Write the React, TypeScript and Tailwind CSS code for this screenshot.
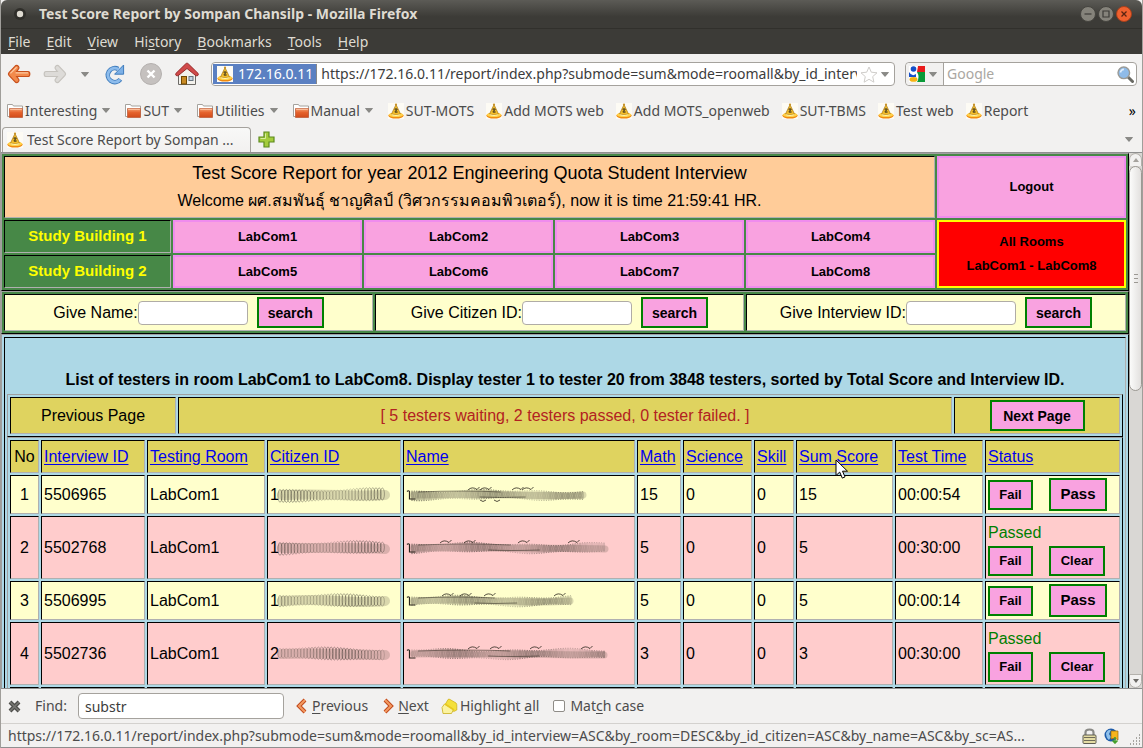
import { FC, ReactNode } from "react";

const cellBorder = "border border-t-black border-l-black border-b-[#b0b0b0] border-r-[#b0b0b0]";
const tableBorder = "border border-t-[#a0a0a0] border-l-[#a0a0a0] border-b-black border-r-black";

const menus = [
	["", "F", "ile"],
	["", "E", "dit"],
	["", "V", "iew"],
	["Hi", "s", "tory"],
	["", "B", "ookmarks"],
	["", "T", "ools"],
	["", "H", "elp"]
];

const folders = ["Interesting", "SUT", "Utilities", "Manual"];
const bookmarks = ["SUT-MOTS", "Add MOTS web", "Add MOTS_openweb", "SUT-TBMS", "Test web", "Report"];

const headings = ["Interview ID", "Testing Room", "Citizen ID", "Name", "Math", "Science", "Skill", "Sum Score", "Test Time", "Status"];

const testers = [
	{ no: 1, id: "5506965", first: "1", nameWidth: 184, math: 15, sum: 15, time: "00:00:54", passed: false, marks: [62, 74, 106, 116] },
	{ no: 2, id: "5502768", first: "1", nameWidth: 206, math: 5, sum: 5, time: "00:30:00", passed: true, marks: [34, 58, 112, 162] },
	{ no: 3, id: "5506995", first: "1", nameWidth: 171, math: 5, sum: 5, time: "00:00:14", passed: false, marks: [36, 54, 78, 148] },
	{ no: 4, id: "5502736", first: "2", nameWidth: 205, math: 3, sum: 3, time: "00:30:00", passed: true, marks: [62, 84, 124, 175] }
];

const Caret: FC = () => (
	<svg width="8" height="5" viewBox="0 0 8 5" className="shrink-0">
		<path d="M0.5 0.5h7L4 4.5z" fill="#8a8a86" stroke="#6a6a67" strokeWidth="0.6" />
	</svg>
);

const Bell: FC = () => (
	<svg width="16" height="16" viewBox="0 0 16 16" className="shrink-0">
		<rect width="16" height="16" fill="#fdfbf4" />
		<ellipse cx="8" cy="12.6" rx="7.6" ry="3" fill="#f08a10" />
		<ellipse cx="8" cy="11.8" rx="7.2" ry="2.3" fill="#ffd24a" />
		<path d="M8 1.6 3.6 10.8Q8 13.6 12.4 10.8z" fill="#f3bd2c" stroke="#a8781a" strokeWidth="0.7" />
		<circle cx="8" cy="1.6" r="1.1" fill="#c9942c" />
		<path d="M6.4 6.2h3L6.8 9h3M8 5v5" fill="none" stroke="#5a4a1e" strokeWidth="1" />
		<path d="M4.2 11.8q3.8 1.6 7.6 0" fill="none" stroke="#fff3b0" strokeWidth="1" />
	</svg>
);

const Folder: FC = () => (
	<svg width="16" height="16" viewBox="0 0 16 16" className="shrink-0">
		<defs>
			<linearGradient id="folder" x2="0" y2="1">
				<stop offset="0" stopColor="#f6a070" />
				<stop offset="0.45" stopColor="#e5622c" />
				<stop offset="1" stopColor="#d14a1a" />
			</linearGradient>
		</defs>
		<path d="M0.5 13.5V1.5h5l1 1.5h9v10.5z" fill="#fff" stroke="#a5a29d" />
		<path d="M2.5 5.5h13v9h-13z" fill="url(#folder)" stroke="#c0603c" strokeWidth="0.8" />
		<path d="M3.2 6.3h11.6" stroke="#fbc7a8" />
	</svg>
);

const ArrowIcon: FC<{ forward?: boolean }> = ({ forward }) => (
	<svg width="24" height="20" viewBox="0 0 24 20">
		<path
			d={
				forward
					? "M12.5 2.4q2-2 3.6 0L22 8.6q1.2 1.4 0 2.8l-5.9 6.2q-1.6 2-3.6 0-1.2-1.6.4-3.2l1.4-1.9H3q-1.8 0-1.8-2.5T3 7.500h11.3l-1.4-1.900q-1.6-1.6-.4-3.2z"
					: "M11.5 2.4q-2-2-3.6 0L2 8.6q-1.2 1.4 0 2.8l5.9 6.2q1.6 2 3.6 0 1.2-1.6-.4-3.2L9.7 12.500H21q1.8 0 1.8-2.500T21 7.500H9.7l1.4-1.900q1.6-1.6.4-3.2z"
			}
			fill={forward ? "#dddbd8" : "#f28a4c"}
			stroke={forward ? "#c6c3be" : "#c8501c"}
			strokeWidth="1.2"
		/>
		{!forward && <path d="M3.4 9.4 9.6 3.2M8.6 8.8H21" fill="none" stroke="#fcc79e" strokeWidth="1.3" />}
	</svg>
);

const ReloadIcon: FC = () => (
	<svg width="21" height="21" viewBox="0 0 21 21">
		<path d="M16.4 15.4A7 7 0 1 1 14.2 5" fill="none" stroke="#3f7cbc" strokeWidth="4.6" />
		<path d="M19.6 1v9.2h-9z" fill="#7db0e6" stroke="#3f7cbc" strokeWidth="1" />
		<path d="M16 15.8A7 7 0 1 1 15 5.4" fill="none" stroke="#8dbcec" strokeWidth="2.8" />
	</svg>
);

const StopIcon: FC = () => (
	<svg width="22" height="22" viewBox="0 0 22 22">
		<circle cx="11" cy="11" r="10.5" fill="#c5c1bf" stroke="#b4b0ae" />
		<path d="m7.5 7.5 7 7m0-7-7 7" stroke="#fff" strokeWidth="2.4" />
	</svg>
);

const HomeIcon: FC = () => (
	<svg width="24" height="24" viewBox="0 0 24 24">
		<path d="M3.5 12 12 5l8.5 7v10.500h-17z" fill="#f3f1ec" stroke="#6c6a66" />
		<path
			d="M12 1.200q.8 0 1.500.8l9.700 9.500q.4 1.400-.4 2-1 .8-2.400-.2L12 6.500l-8.400 6.800q-1.400 1-2.400.2-.8-.6-.4-2L10.500 2q.7-.8 1.500-.8z"
			fill="#d04a4a"
			stroke="#8f2020"
			strokeWidth="0.9"
		/>
		<rect x="6.5" y="14.500" width="5" height="7.500" fill="#c88a24" stroke="#704800" />
		<rect x="14" y="14.500" width="4" height="4" fill="#c4d4e2" stroke="#66737e" />
	</svg>
);

const GoogleIcon: FC = () => (
	<svg width="16" height="16" viewBox="0 0 16 16" className="shrink-0">
		<rect width="16" height="16" fill="#fff" />
		<path d="M9 0h7v6H8z" fill="#ea1c1c" />
		<path d="M8 6h8v10H8q3-5 0-10z" fill="#0a9a38" />
		<path d="M0 6q3 5 7 2v3H0z" fill="#1650c8" />
		<circle cx="4.5" cy="3" r="2.800" fill="#1650c8" />
		<ellipse cx="4.5" cy="13.4" rx="4" ry="2.400" fill="#f5b414" />
	</svg>
);

const SearchIcon: FC = () => (
	<svg width="17" height="17" viewBox="0 0 17 17" className="shrink-0">
		<path d="m10.5 10.5 5 5" stroke="#6a6a64" strokeWidth="3" strokeLinecap="round" />
		<circle cx="6.8" cy="6.8" r="5.8" fill="#8fbbe8" stroke="#9a9a96" strokeWidth="1.4" />
		<path d="M3.6 6.6a3.3 3.3 0 0 1 3.3-3.3" fill="none" stroke="#e2effc" strokeWidth="1.7" />
	</svg>
);

// scrubbed-out personal data
const Scribble: FC<{ width: number; marks?: number[]; shift: number }> = ({ width, marks, shift }) => {
	const named = Boolean(marks);
	const step = named ? 2.4 : 3.2;
	const loops = Array.from({ length: Math.floor((width - 10) / step) }, (_, i) => i);

	return (
		<svg width={width} height="22" viewBox={`0 0 ${width} 22`} className="shrink-0">
			<path
				d={`M8 11Q${width * 0.3} ${9 + (shift % 3)} ${width * 0.55} 11T${width - 7} ${12 - (shift % 2)}`}
				fill="none"
				stroke="#554f42"
				strokeOpacity="0.22"
				strokeWidth={named ? 7 : 10}
				strokeLinecap="round"
			/>
			{loops.map((i) => (
				<ellipse
					key={i}
					cx={6 + i * step}
					cy={11 + Math.sin(i / 9 + shift)}
					rx={named ? 0.7 : 2}
					ry={(named ? 4.4 : 5.6) + Math.sin(i / 4 + shift) * 0.9}
					fill="none"
					stroke="#2e2a24"
					strokeOpacity={0.34 + Math.sin(i / 5 + shift) * 0.14}
					strokeWidth="0.8"
				/>
			))}
			{named && <path d="M1 7.5q1.5-1.5 2.500 0v7.500h6" fill="none" stroke="#2a251c" strokeWidth="1.2" />}
			{named && (
				<path
					d={`M12 8q${width / 4}-2 ${width * 0.45} 0M${width * 0.4} 13q20 1 ${width * 0.25} 0`}
					fill="none"
					stroke="#2a251c"
					strokeOpacity="0.5"
				/>
			)}
			{marks?.map((x) => (
				<path key={x} d={`M${x} 6q4-4 9-.5l2.500-2.500`} fill="none" stroke="#2a251c" strokeOpacity="0.8" />
			))}
			{marks && shift === 1 && <path d={`M${marks[1]} 16q3 3 6 0M${marks[1] + 14} 16q3 3 6 0`} fill="none" stroke="#2a251c" strokeOpacity="0.8" />}
		</svg>
	);
};

const ActionButton: FC<{ children: ReactNode; className: string }> = ({ children, className }) => (
	<button className={`border-2 border-[#008000] bg-[#f9a2e0] font-bold text-black ${className}`}>{children}</button>
);

const RoomCell: FC<{ name: string }> = ({ name }) => (
	<td className="p-0">
		<button className="block h-[33px] w-full border-2 border-[#f08cee] bg-[#f9a2e0] text-[13px] font-bold">{name}</button>
	</td>
);

const SearchCell: FC<{ label: string; name: string }> = ({ label, name }) => (
	<td className={`bg-[#ffffcc] p-[2px] ${cellBorder}`}>
		<form className="flex items-center justify-center" onSubmit={(e) => e.preventDefault()}>
			<label htmlFor={name}>{label}</label>
			<input id={name} className="mr-[9px] h-6 w-[110px] rounded border border-[#b0aca6] bg-white px-1" />
			<ActionButton className="h-[31px] w-[67px] text-sm">search</ActionButton>
		</form>
	</td>
);

const BrowserHeader: FC = () => (
	<header className="shrink-0 border-b border-[#8f8f8f] bg-[#f2f1f0] text-sm text-[#4c4c4c]">
		<div className="flex h-[29px] items-center gap-3 rounded-t-md border-b border-[#31302c] bg-linear-to-b from-[#5c5b56] to-[#3c3b37] to-60% pr-[10px] pl-3">
			<svg width="14" height="14" viewBox="0 0 14 14">
				<circle cx="7" cy="7" r="6" fill="#2f2e2a" />
				<circle cx="7" cy="7" r="3.2" fill="#dfdbd2" />
			</svg>
			<p className="flex-1 text-sm font-bold text-[#dfdbd2]">Test Score Report by Sompan Chansilp - Mozilla Firefox</p>
			<div className="flex gap-[2px]">
				<button aria-label="Minimize">
					<svg width="16" height="16" viewBox="0 0 16 16">
						<circle cx="8" cy="8" r="7.5" fill="#85837b" stroke="#45443f" />
						<path d="M4.5 8h7" stroke="#3c3b37" strokeWidth="1.2" />
					</svg>
				</button>
				<button aria-label="Maximize">
					<svg width="16" height="16" viewBox="0 0 16 16">
						<circle cx="8" cy="8" r="7.5" fill="#85837b" stroke="#45443f" />
						<path d="M5 5h6v6H5z" fill="none" stroke="#3c3b37" strokeWidth="1.2" />
					</svg>
				</button>
				<button aria-label="Close">
					<svg width="16" height="16" viewBox="0 0 16 16">
						<circle cx="8" cy="8" r="7.5" fill="#f0612f" stroke="#a8401c" />
						<path d="m5.5 5.5 5 5m0-5-5 5" stroke="#5a2412" strokeWidth="1.3" />
					</svg>
				</button>
			</div>
		</div>
		<nav className="flex h-[25px] items-center gap-4 bg-[#3c3b37] px-[7px] text-[#dfdbd2]">
			{menus.map(([before, key, after]) => (
				<button key={after}>
					{before}
					<span className="underline underline-offset-2">{key}</span>
					{after}
				</button>
			))}
		</nav>
		<div className="flex h-10 items-center pr-[5px] pl-[6px]">
			<button aria-label="Back">
				<ArrowIcon />
			</button>
			<button aria-label="Forward" className="ml-3">
				<ArrowIcon forward />
			</button>
			<button aria-label="History" className="ml-[14px]">
				<Caret />
			</button>
			<button aria-label="Reload" className="ml-[15px]">
				<ReloadIcon />
			</button>
			<button aria-label="Stop" className="ml-[15px]">
				<StopIcon />
			</button>
			<button aria-label="Home" className="ml-[13px]">
				<HomeIcon />
			</button>
			<div className="ml-3 flex h-6 min-w-0 flex-1 items-center rounded border border-[#a5a29d] bg-white pr-[5px] pl-px">
				<span className="flex h-5 items-center gap-[5px] border-r border-[#888] bg-[#5b80c2] pr-[3px] pl-1 text-white">
					<Bell />
					172.16.0.11
				</span>
				<input
					aria-label="Address"
					className="ml-1 min-w-0 flex-1 text-[#3c3c3c]"
					defaultValue="https://172.16.0.11/report/index.php?submode=sum&mode=roomall&by_id_interview=ASC"
				/>
				<svg width="18" height="17" viewBox="0 0 18 17" className="mx-[3px] shrink-0">
					<path d="m9 1 2.3 5.2 5.7.6-4.3 3.8 1.2 5.600L9 13.3l-4.900 2.900 1.2-5.600L1 6.800l5.700-.6z" fill="#fff" stroke="#cfcdca" />
				</svg>
				<Caret />
			</div>
			<div className="ml-[10px] flex h-6 w-[232px] items-center rounded border border-[#a5a29d] bg-white pr-[2px]">
				<span className="flex h-full items-center gap-1 rounded-l border-r border-[#a5a29d] bg-[#f2f1f0] pr-[6px] pl-[3px]">
					<GoogleIcon />
					<Caret />
				</span>
				<input aria-label="Search" placeholder="Google" className="ml-[3px] min-w-0 flex-1 placeholder:text-[#aaa7a2]" />
				<SearchIcon />
			</div>
		</div>
		<div className="flex h-[33px] items-center gap-[15px] px-[6px]">
			{folders.map((name) => (
				<button key={name} className="flex items-center gap-[2px] whitespace-nowrap">
					<Folder />
					{name}
					<span className="ml-[3px]">
						<Caret />
					</span>
				</button>
			))}
			<div className="flex flex-1 items-center gap-3">
				{bookmarks.map((name) => (
					<a key={name} href="#" className="flex items-center gap-[2px] whitespace-nowrap">
						<Bell />
						{name}
					</a>
				))}
			</div>
			<button aria-label="More bookmarks" className="text-black">
				»
			</button>
		</div>
		<div className="flex h-[25px] items-center pr-[9px] pl-px">
			<div className="flex h-[25px] w-[249px] items-center gap-1 rounded-t border border-b-0 border-[#a5a29d] bg-linear-to-b from-[#f8f8f7] to-[#f2f1f0] pl-1">
				<Bell />
				<span className="truncate">Test Score Report by Sompan ...</span>
			</div>
			<button aria-label="New tab" className="ml-[7px]">
				<svg width="17" height="17" viewBox="0 0 17 17">
					<path d="M6 1h5v5h5v5h-5v5H6v-5H1V6h5z" fill="#a4cc3c" stroke="#5c8a1c" strokeWidth="1.2" />
					<path d="M7.5 2.5v5h-5" fill="none" stroke="#d8eca0" />
				</svg>
			</button>
			<span className="flex-1" />
			<Caret />
		</div>
	</header>
);

const ScoreTable: FC = () => (
	<table className={`w-full table-fixed border-separate border-spacing-[2px] text-left ${tableBorder}`}>
		<colgroup>
			<col className="w-[29px]" />
			<col className="w-[104px]" />
			<col className="w-[118px]" />
			<col className="w-[134px]" />
			<col />
			<col className="w-[44px]" />
			<col className="w-[69px]" />
			<col className="w-[40px]" />
			<col className="w-[97px]" />
			<col className="w-[88px]" />
			<col className="w-[135px]" />
		</colgroup>
		<thead>
			<tr className="h-[33px] bg-[#dfd35f]">
				<th className={`text-center font-normal ${cellBorder}`}>No</th>
				{headings.map((heading) => (
					<th key={heading} className={`relative px-[2px] font-normal whitespace-nowrap ${cellBorder}`}>
						<a href="#" className="text-[#0000ee] underline underline-offset-2">
							{heading}
						</a>
						{heading === "Sum Score" && (
							<svg width="14" height="21" viewBox="0 0 14 21" className="absolute top-[18px] left-[38px] z-10">
								<path d="M1 1v15.5l3.700-3.400 2.600 6 2.700-1.200-2.500-5.700h5z" fill="#fff" stroke="#000" />
							</svg>
						)}
					</th>
				))}
			</tr>
		</thead>
		<tbody>
			{testers.map((tester) => (
				<tr key={tester.no} className={tester.passed ? "h-[63px] bg-[#ffcccc]" : "h-[39px] bg-[#ffffcc]"}>
					<td className={`text-center ${cellBorder}`}>{tester.no}</td>
					<td className={`px-[2px] ${cellBorder}`}>{tester.id}</td>
					<td className={`px-[2px] ${cellBorder}`}>LabCom1</td>
					<td className={`px-[2px] ${cellBorder}`}>
						<div className="flex items-center">
							<span className="w-1">{tester.first}</span>
							<Scribble width={118} shift={tester.no} />
						</div>
					</td>
					<td className={`px-[2px] ${cellBorder}`}>
						<Scribble width={tester.nameWidth} marks={tester.marks} shift={tester.no} />
					</td>
					<td className={`px-[2px] ${cellBorder}`}>{tester.math}</td>
					<td className={`px-[2px] ${cellBorder}`}>0</td>
					<td className={`px-[2px] ${cellBorder}`}>0</td>
					<td className={`px-[2px] ${cellBorder}`}>{tester.sum}</td>
					<td className={`px-[2px] ${cellBorder}`}>{tester.time}</td>
					<td className={`p-[2px] ${cellBorder}`}>
						{tester.passed && <p className="h-[27px] leading-[27px] text-[#008000]">Passed</p>}
						<div className="flex items-center gap-4">
							<ActionButton className="h-[30px] w-[45px] text-[13px]">Fail</ActionButton>
							{tester.passed ? (
								<ActionButton className="h-[30px] w-[56px] text-[13px]">Clear</ActionButton>
							) : (
								<ActionButton className="h-[33px] w-[58px] text-[15px]">Pass</ActionButton>
							)}
						</div>
					</td>
				</tr>
			))}
			<tr className="h-[39px] bg-[#ffffcc]">
				<td className={cellBorder} />
				{headings.map((heading) => (
					<td key={heading} className={cellBorder} />
				))}
			</tr>
		</tbody>
	</table>
);

const ReportPage: FC = () => (
	<main className="min-w-0 flex-1 overflow-hidden bg-[#add8e6] font-['Liberation_Sans',Arial,sans-serif] text-base text-black">
		<table className={`w-full table-fixed border-separate border-spacing-[2px] bg-[#478847] text-center ${tableBorder}`}>
			<colgroup>
				<col className="w-[167px]" />
				<col />
				<col />
				<col />
				<col />
				<col />
			</colgroup>
			<tbody>
				<tr>
					<td colSpan={5} className={`h-[62px] bg-[#ffcc99] p-0 ${cellBorder}`}>
						<p className="text-lg leading-7">Test Score Report for year 2012 Engineering Quota Student Interview</p>
						<p className="leading-7">Welcome ผศ.สมพันธุ์ ชาญศิลป์ (วิศวกรรมคอมพิวเตอร์), now it is time 21:59:41 HR.</p>
					</td>
					<td className="p-0">
						<button className="block h-[62px] w-full border-2 border-[#f08cee] bg-[#f9a2e0] text-[13px] font-bold">Logout</button>
					</td>
				</tr>
				<tr>
					<td className={`p-0 text-[15px] font-bold text-[#ffff00] ${cellBorder}`}>Study Building 1</td>
					<RoomCell name="LabCom1" />
					<RoomCell name="LabCom2" />
					<RoomCell name="LabCom3" />
					<RoomCell name="LabCom4" />
					<td rowSpan={2} className="p-0">
						<button className="block h-[68px] w-full border-2 border-[#ffff00] bg-[#ff0000] text-[13px] leading-6 font-bold">
							All Rooms
							<br />
							LabCom1 - LabCom8
						</button>
					</td>
				</tr>
				<tr>
					<td className={`p-0 text-[15px] font-bold text-[#ffff00] ${cellBorder}`}>Study Building 2</td>
					<RoomCell name="LabCom5" />
					<RoomCell name="LabCom6" />
					<RoomCell name="LabCom7" />
					<RoomCell name="LabCom8" />
				</tr>
			</tbody>
		</table>
		<table className={`w-full table-fixed border-separate border-spacing-[2px] bg-[#478847] ${tableBorder}`}>
			<colgroup>
				<col className="w-[33%]" />
				<col className="w-[33%]" />
				<col />
			</colgroup>
			<tbody>
				<tr>
					<SearchCell label="Give Name:" name="name" />
					<SearchCell label="Give Citizen ID:" name="citizen" />
					<SearchCell label="Give Interview ID:" name="interview" />
				</tr>
			</tbody>
		</table>
		<table className={`w-full table-fixed border-separate border-spacing-[2px] ${tableBorder}`}>
			<tbody>
				<tr>
					<td className={`p-[2px] ${cellBorder}`}>
						<h1 className="h-[54px] pt-7 text-center leading-6 font-bold">
							List of testers in room LabCom1 to LabCom8. Display tester 1 to tester 20 from 3848 testers, sorted by Total Score and Interview ID.
						</h1>
						<table className={`w-full table-fixed border-separate border-spacing-[2px] text-center ${tableBorder}`}>
							<tbody>
								<tr className="h-[37px] bg-[#dfd35f]">
									<td className={`w-[166px] p-0 ${cellBorder}`}>Previous Page</td>
									<td className={`p-0 text-[#b22222] ${cellBorder}`}>[ 5 testers waiting, 2 testers passed, 0 tester failed. ]</td>
									<td className={`w-[166px] p-0 ${cellBorder}`}>
										<ActionButton className="mx-auto block h-[31px] w-[95px] text-sm">Next Page</ActionButton>
									</td>
								</tr>
							</tbody>
						</table>
						<ScoreTable />
					</td>
				</tr>
			</tbody>
		</table>
	</main>
);

const Scrollbar: FC = () => (
	<div className="flex w-[13px] shrink-0 flex-col bg-[#d9d7d4]">
		<div className="flex h-[13px] items-center justify-center rounded-t-lg border border-b-0 border-[#b4b1ac] bg-[#f2f1f0]">
			<svg width="6" height="4" viewBox="0 0 6 4">
				<path d="M3 0 6 4H0z" fill="#a5a29d" />
			</svg>
		</div>
		<div className="flex h-[225px] flex-col items-center justify-center gap-[3px] rounded-lg border border-[#9c9993] bg-linear-to-r from-[#fbfbfa] to-[#e2e0de]">
			<span className="h-px w-1 bg-[#9c9993]" />
			<span className="h-px w-1 bg-[#9c9993]" />
			<span className="h-px w-1 bg-[#9c9993]" />
		</div>
		<div className="flex-1" />
		<div className="flex h-[14px] items-center justify-center rounded-b-lg border border-[#b4b1ac] bg-[#f2f1f0]">
			<svg width="6" height="4" viewBox="0 0 6 4">
				<path d="M0 0h6L3 4z" fill="#6c6a66" />
			</svg>
		</div>
	</div>
);

const Chevron: FC<{ next?: boolean }> = ({ next }) => (
	<svg width="12" height="16" viewBox="0 0 12 16">
		<path d={next ? "m3 2 6 6-6 6" : "m9 2-6 6 6 6"} fill="none" stroke="#c24a1c" strokeWidth="4" />
		<path d={next ? "m3 2 6 6-6 6" : "m9 2-6 6 6 6"} fill="none" stroke="#f39a62" strokeWidth="2" />
	</svg>
);

const BrowserFooter: FC = () => (
	<footer className="shrink-0 border-t border-[#8f8f8f] bg-[#f2f1f0] text-sm text-[#4c4c4c]">
		<div className="flex h-[35px] items-center border-b border-[#d3d1ce] pl-[7px]">
			<button aria-label="Close find bar">
				<svg width="13" height="13" viewBox="0 0 13 13">
					<path d="m2 2 9 9m0-9-9 9" stroke="#4f4f4c" strokeWidth="4" />
					<path d="m2 2 9 9m0-9-9 9" stroke="#777773" strokeWidth="1.5" />
				</svg>
			</button>
			<label htmlFor="find" className="ml-[14px] w-[43px]">
				Find:
			</label>
			<input id="find" defaultValue="substr" className="h-[26px] w-[206px] rounded border border-[#a5a29d] bg-white px-[6px] text-[#3c3c3c]" />
			<button className="ml-3 flex items-center gap-1">
				<Chevron />
				<span>
					<span className="underline underline-offset-2">P</span>revious
				</span>
			</button>
			<button className="ml-[14px] flex items-center gap-1">
				<Chevron next />
				<span>
					<span className="underline underline-offset-2">N</span>ext
				</span>
			</button>
			<button className="ml-3 flex items-center gap-[2px]">
				<svg width="17" height="17" viewBox="0 0 17 17">
					<path d="M4.500 6 7 1.500q1-.8 2 0l6 3.500q1 1 .8 3v4l-3 1.500z" fill="#f4e03c" stroke="#d0b41c" strokeWidth="0.8" />
					<path d="M1 9.500 3.500 6l9 5.500-2 4H2z" fill="#fbf3a0" stroke="#c9ae1c" strokeWidth="0.8" />
					<path d="m4 6 9 6" stroke="#e8c820" strokeWidth="1.6" />
				</svg>
				<span>
					Highlight <span className="underline underline-offset-2">a</span>ll
				</span>
			</button>
			<label className="ml-[14px] flex items-center gap-[5px]">
				<input type="checkbox" className="size-3 appearance-none rounded-xs border border-[#8f8c87] bg-white" />
				<span>
					Mat<span className="underline underline-offset-2">c</span>h case
				</span>
			</label>
		</div>
		<div className="flex h-6 items-center border-b border-[#8f8f8f] pr-px pl-[7px]">
			<p className="min-w-0 flex-1 truncate">
				https://172.16.0.11/report/index.php?submode=sum&amp;mode=roomall&amp;by_id_interview=ASC&amp;by_room=DESC&amp;by_id_citizen=ASC&amp;by_name=ASC&amp;by_sc=AS...
			</p>
			<svg width="15" height="16" viewBox="0 0 15 16" className="shrink-0">
				<path d="M3.5 8V4.5q0-3 4-3t4 3V8" fill="none" stroke="#8a8a86" strokeWidth="2.2" />
				<rect x="1" y="7" width="13" height="8.5" rx="1" fill="#e4dca4" stroke="#5f5d52" />
				<path d="M2 9.5h11M2 12.5h11" stroke="#6f6b58" />
			</svg>
			<svg width="16" height="16" viewBox="0 0 16 16" className="ml-[7px] shrink-0">
				<circle cx="7" cy="7" r="6.5" fill="#1c5aa8" />
				<path d="M2 5q2-4 5-3L5 6l2 3-2 3Q2 10 2 5z" fill="#8fc0ea" />
				<path d="M7 3h7v9l-3-2-4 1z" fill="#f6b41c" stroke="#9c6a08" strokeWidth="0.7" />
				<path d="M11 9v6m-2.5-2.5L11 15l2.5-2.5" fill="none" stroke="#46a02c" strokeWidth="1.6" />
			</svg>
			<svg width="12" height="12" viewBox="0 0 12 12" className="mt-2 ml-[9px] shrink-0">
				<path d="M10 1h1M7 4h1m2 0h1M4 7h1m2 0h1m2 0h1M1 10h1m2 0h1m2 0h1m2 0h1" stroke="#8f8c87" strokeWidth="1.5" />
			</svg>
		</div>
	</footer>
);

const App: FC = () => (
	<div className="flex h-screen flex-col overflow-hidden border-x border-[#a09e9a] bg-white font-['Noto_Sans','Open_Sans',sans-serif]">
		<BrowserHeader />
		<div className="flex min-h-0 flex-1">
			<ReportPage />
			<Scrollbar />
		</div>
		<BrowserFooter />
	</div>
);

export default App;
